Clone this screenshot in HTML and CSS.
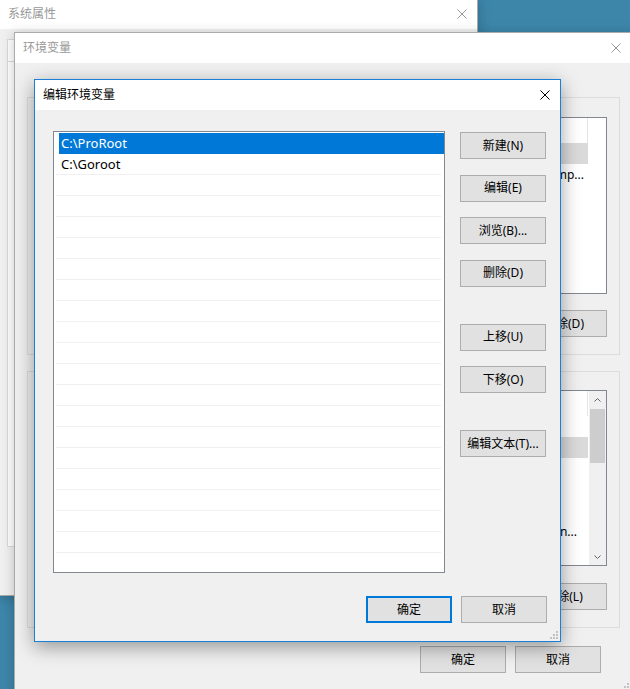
FILE: index.html
```html
<!DOCTYPE html>
<html lang="zh-CN">
<head>
    <meta charset="UTF-8">
    <meta name="viewport" content="width=device-width, initial-scale=1.0">
    <title>编辑环境变量</title>
    <link rel="stylesheet" href="styles.css">
</head>
<body>
    <div class="desktop">

        <!-- 系统属性 (behind) -->
        <div class="window win-sys">
            <div class="title-bar">
                <span class="title">系统属性</span>
                <svg class="close" width="10" height="10" viewBox="0 0 10 10"><path d="M0.5 0.5L9.5 9.5M9.5 0.5L0.5 9.5" stroke="currentColor" stroke-width="1"/></svg>
            </div>
            <div class="win-body sys-body">
                <div class="tabs">
                    <span class="tab active"></span>
                    <span class="tab"></span>
                    <span class="tab"></span>
                </div>
                <div class="tab-page"></div>
            </div>
        </div>

        <!-- 环境变量 -->
        <div class="window win-env">
            <div class="title-bar">
                <span class="title">环境变量</span>
                <svg class="close" width="10" height="10" viewBox="0 0 10 10"><path d="M0.5 0.5L9.5 9.5M9.5 0.5L0.5 9.5" stroke="currentColor" stroke-width="1"/></svg>
            </div>
            <div class="win-body env-body">
                <div class="group group-user">
                    <div class="list-view lv-user">
                        <div class="lv-main">
                            <div class="lv-header">
                                <span class="col-name"></span>
                                <span class="col-value"></span>
                            </div>
                            <div class="lv-row selected">
                                <span class="col-name"></span>
                                <span class="col-value"></span>
                            </div>
                            <div class="lv-row">
                                <span class="col-name"></span>
                                <span class="col-value cut"><span>Temp...</span></span>
                            </div>
                            <div class="lv-row">
                                <span class="col-name"></span>
                                <span class="col-value"></span>
                            </div>
                        </div>
                    </div>
                    <div class="group-buttons">
                        <button class="btn"></button>
                        <button class="btn"></button>
                        <button class="btn">删除(D)</button>
                    </div>
                </div>

                <div class="group group-system">
                    <div class="list-view lv-system">
                        <div class="lv-main">
                            <div class="lv-header">
                                <span class="col-name"></span>
                                <span class="col-value"></span>
                            </div>
                            <div class="lv-row"></div>
                            <div class="lv-row selected">
                                <span class="col-name"></span>
                                <span class="col-value"></span>
                            </div>
                            <div class="lv-row"></div>
                            <div class="lv-row"></div>
                            <div class="lv-row"></div>
                            <div class="lv-row">
                                <span class="col-name"></span>
                                <span class="col-value cut short"><span>Win...</span></span>
                            </div>
                            <div class="lv-row"></div>
                        </div>
                        <div class="scrollbar">
                            <div class="sb-arrow">
                                <svg width="7" height="4" viewBox="0 0 7 4"><path d="M0.5 3.5L3.5 0.5L6.5 3.5" fill="none" stroke="#606060" stroke-width="1"/></svg>
                            </div>
                            <div class="sb-track"><div class="sb-thumb"></div></div>
                            <div class="sb-arrow">
                                <svg width="7" height="4" viewBox="0 0 7 4"><path d="M0.5 0.5L3.5 3.5L6.5 0.5" fill="none" stroke="#606060" stroke-width="1"/></svg>
                            </div>
                        </div>
                    </div>
                    <div class="group-buttons">
                        <button class="btn"></button>
                        <button class="btn"></button>
                        <button class="btn">删除(L)</button>
                    </div>
                </div>

                <div class="footer env-footer">
                    <button class="btn">确定</button>
                    <button class="btn">取消</button>
                </div>
            </div>
            <svg class="grip" width="8" height="8" viewBox="0 0 8 8"><path d="M6 0h2v2h-2zM3 3h2v2h-2zM6 3h2v2h-2zM0 6h2v2h-2zM3 6h2v2h-2zM6 6h2v2h-2z" fill="#c2c2c2"/></svg>
        </div>

        <!-- 编辑环境变量 (active) -->
        <div class="window win-edit active">
            <div class="title-bar">
                <span class="title">编辑环境变量</span>
                <svg class="close" width="10" height="10" viewBox="0 0 10 10"><path d="M0.5 0.5L9.5 9.5M9.5 0.5L0.5 9.5" stroke="currentColor" stroke-width="1"/></svg>
            </div>
            <div class="win-body edit-body">
                <div class="edit-main">
                    <ul class="path-list">
                        <li class="selected">C:\ProRoot</li>
                        <li>C:\Goroot</li>
                        <li></li><li></li><li></li><li></li><li></li><li></li>
                        <li></li><li></li><li></li><li></li><li></li><li></li>
                        <li></li><li></li><li></li><li></li><li></li><li></li>
                        <li></li>
                    </ul>
                    <div class="side-buttons">
                        <button class="btn">新建(N)</button>
                        <button class="btn">编辑(E)</button>
                        <button class="btn">浏览(B)...</button>
                        <button class="btn">删除(D)</button>
                        <button class="btn group-start">上移(U)</button>
                        <button class="btn">下移(O)</button>
                        <button class="btn group-start">编辑文本(T)...</button>
                    </div>
                </div>
                <div class="footer edit-footer">
                    <button class="btn default">确定</button>
                    <button class="btn">取消</button>
                </div>
            </div>
            <svg class="grip" width="8" height="8" viewBox="0 0 8 8"><path d="M6 0h2v2h-2zM3 3h2v2h-2zM6 3h2v2h-2zM0 6h2v2h-2zM3 6h2v2h-2zM6 6h2v2h-2z" fill="#c2c2c2"/></svg>
        </div>

    </div>
</body>
</html>
```

FILE: styles.css
```css
* {
    margin: 0;
    padding: 0;
    box-sizing: border-box;
}

body {
    background: #3d86aa;
    font-family: "Noto Sans", "Noto Sans CJK SC", sans-serif;
    font-size: 12px;
    color: #000;
    overflow: hidden;
}

.desktop {
    position: relative;
    width: 630px;
    height: 689px;
    overflow: hidden;
}

/* windows sit on a free canvas */
.window {
    position: absolute;
    display: flex;
    flex-direction: column;
    background: #f0f0f0;
    border: 1px solid #aaaaaa;
    box-shadow: 0 2px 12px rgba(0, 0, 0, 0.22);
}

.window.active {
    border-color: #1c7fd6;
    box-shadow: 0 5px 18px rgba(0, 0, 0, 0.38);
}

.win-sys {
    left: -1px;
    top: -2px;
    width: 479px;
    height: 598px;
}

.win-env {
    left: 14px;
    top: 32px;
    width: 618px;
    height: 662px;
}

.win-edit {
    left: 34px;
    top: 79px;
    width: 527px;
    height: 563px;
}

.title-bar {
    height: 30px;
    flex-shrink: 0;
    background: #fff;
    display: flex;
    align-items: center;
    justify-content: space-between;
    padding: 0 10px 0 8px;
    color: #999;
}

.title {
    font-size: 12px;
    line-height: 16px;
}

.active .title-bar {
    color: #000;
}

.close {
    display: block;
}

.win-body {
    flex: 1;
    display: flex;
    flex-direction: column;
}

.grip {
    position: absolute;
    right: 2px;
    bottom: 2px;
}

/* buttons */
.btn {
    width: 86px;
    height: 27px;
    background: #e1e1e1;
    border: 1px solid #adadad;
    font-family: inherit;
    font-size: 12px;
    color: #000;
    line-height: 16px;
}

.btn.default {
    border: 2px solid #0078d7;
}

.footer {
    display: flex;
    justify-content: flex-end;
    gap: 9px;
}

/* 系统属性 */
.sys-body {
    padding: 10px 0 48px 7px;
}

.tabs {
    display: flex;
    height: 22px;
}

.tab {
    width: 60px;
    border: 1px solid #d9d9d9;
    border-bottom: none;
    background: #f0f0f0;
}

.tab.active {
    background: #fff;
}

.tab-page {
    flex: 1;
    background: #fff;
    border: 1px solid #d9d9d9;
}

/* 环境变量 */
.env-body {
    padding: 34px 11px 0 12px;
}

.group {
    border: 1px solid #dcdcdc;
    padding: 19px 12px 17px 11px;
}

.group-system {
    margin-top: 16px;
    padding-top: 18px;
}

.list-view {
    display: flex;
    background: #fff;
    border: 1px solid #828790;
    overflow: hidden;
}

.lv-user {
    height: 177px;
}

.lv-system {
    height: 176px;
}

.lv-main {
    flex: 1;
    overflow: hidden;
}

.lv-header {
    display: flex;
    height: 25px;
}

.lv-header .col-value {
    border-right: 1px solid #e5e5e5;
}

.lv-row {
    display: flex;
    width: 548px;
    height: 21px;
    line-height: 21px;
}

.lv-row.selected {
    background: #dadada;
}

.col-name {
    width: 150px;
    flex-shrink: 0;
}

.col-value {
    width: 398px;
    flex-shrink: 0;
    display: flex;
    padding-right: 4px;
    white-space: nowrap;
    overflow: hidden;
}

.col-value.cut {
    justify-content: flex-end;
}

.col-value.short {
    padding-right: 11px;
}

.scrollbar {
    width: 17px;
    flex-shrink: 0;
    display: flex;
    flex-direction: column;
    background: #f0f0f0;
}

.sb-arrow {
    height: 17px;
    display: flex;
    align-items: center;
    justify-content: center;
}

.sb-track {
    flex: 1;
    padding: 1px 1px 0;
}

.sb-thumb {
    height: 54px;
    background: #cdcdcd;
}

.group-buttons {
    display: flex;
    justify-content: flex-end;
    gap: 10px;
    margin-top: 16px;
}

.group-system .group-buttons {
    margin-top: 17px;
}

.env-footer {
    margin-top: 18px;
    padding-right: 19px;
}

/* 编辑环境变量 */
.edit-body {
    padding: 21px 13px 0 18px;
}

.edit-main {
    display: flex;
    gap: 15px;
}

.path-list {
    list-style: none;
    width: 392px;
    height: 442px;
    padding-top: 1px;
    background: #fff;
    border: 1px solid #828790;
    overflow: hidden;
}

.path-list li {
    height: 21px;
    line-height: 20px;
    margin: 0 3px 0 2px;
    padding-left: 5px;
    border-bottom: 1px solid #f0f0f0;
    font-size: 13px;
    white-space: nowrap;
}

.path-list li.selected {
    margin: 0 0 0 5px;
    padding-left: 2px;
    background: #0078d7;
    border-bottom-color: #0078d7;
    color: #fff;
}

.side-buttons {
    display: flex;
    flex-direction: column;
    gap: 15.5px;
    padding-top: 1px;
}

.side-buttons .group-start {
    margin-top: 21.5px;
}

.edit-footer {
    margin-top: 23px;
}
```
